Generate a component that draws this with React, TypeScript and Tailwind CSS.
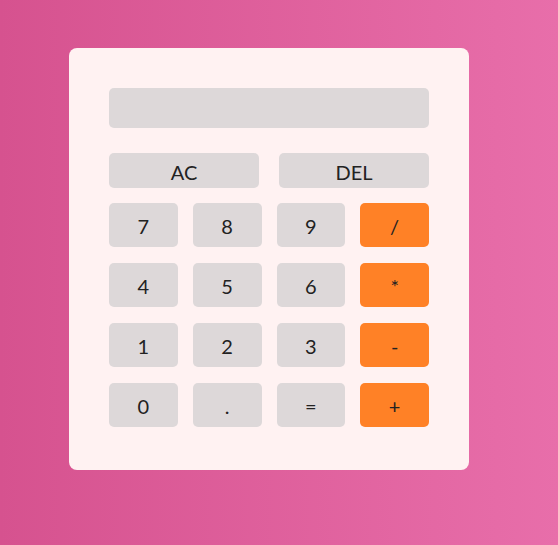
const keys = [
  { label: '7' }, { label: '8' }, { label: '9' }, { label: '/', op: true },
  { label: '4' }, { label: '5' }, { label: '6' }, { label: '*', op: true },
  { label: '1' }, { label: '2' }, { label: '3' }, { label: '-', op: true },
  { label: '0' }, { label: '.' }, { label: '=' }, { label: '+', op: true },
];

export default function App() {
  return (
    <div
      className="w-[558px] h-[545px] pt-[48px] pl-[69px] bg-gradient-to-r from-[#d6528f] to-[#e86eaa]"
      style={{ fontFamily: 'Lato, "Noto Sans", sans-serif' }}
    >
      <div className="w-[400px] h-[422px] rounded-[8px] bg-[#fff2f2] px-[40px] pt-[40px]">
        {/* Visor */}
        <div className="h-[40px] rounded-[5px] bg-[#ddd8d9] mb-[25px]"></div>

        <div className="flex gap-[20px] mb-[15px]">
          <button className="w-[150px] h-[35px] rounded-[5px] bg-[#ddd8d9] text-[20px] text-[#222] pt-[2px]">AC</button>
          <button className="w-[150px] h-[35px] rounded-[5px] bg-[#ddd8d9] text-[20px] text-[#222] pt-[2px]">DEL</button>
        </div>

        <div className="grid grid-cols-4 gap-x-[15px] gap-y-[16px]">
          {keys.map((k) => (
            <button
              key={k.label}
              className={
                k.op
                  ? 'h-[44px] rounded-[5px] bg-[#ff8126] text-[20px] text-[#222] pt-[2px]'
                  : 'h-[44px] rounded-[5px] bg-[#ddd8d9] text-[20px] text-[#222] pt-[2px]'
              }
            >
              {k.label}
            </button>
          ))}
        </div>
      </div>
    </div>
  );
}
